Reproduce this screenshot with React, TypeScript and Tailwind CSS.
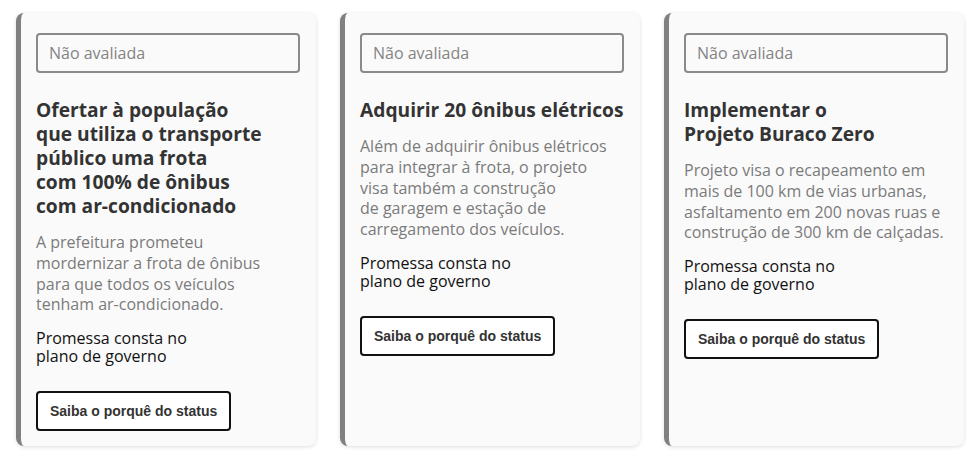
const promises = [
  {
    title: ["Ofertar à população", "que utiliza o transporte", "público uma frota", "com 100% de ônibus", "com ar-condicionado"],
    description: ["A prefeitura prometeu", "mordernizar a frota de ônibus", "para que todos os veículos", "tenham ar-condicionado."],
  },
  {
    title: ["Adquirir 20 ônibus elétricos"],
    description: [
      "Além de adquirir ônibus elétricos",
      "para integrar à frota, o projeto",
      "visa também a construção",
      "de garagem e estação de",
      "carregamento dos veículos.",
    ],
  },
  {
    title: ["Implementar o", "Projeto Buraco Zero"],
    description: [
      "Projeto visa o recapeamento em",
      "mais de 100 km de vias urbanas,",
      "asfaltamento em 200 novas ruas e",
      "construção de 300 km de calçadas.",
    ],
  },
];

function Lines({ lines }: { lines: string[] }) {
  return (
    <>
      {lines.map((line) => (
        <span key={line} className="block whitespace-nowrap">
          {line}
        </span>
      ))}
    </>
  );
}

function PromiseCard({ title, description }: { title: string[]; description: string[] }) {
  return (
    <div className="flex w-[300px] flex-col rounded-lg border-l-[5px] border-[#808080] bg-[#fafafa] pb-[15px] pl-[15px] pr-[16px] pt-[20px] shadow-[0_1px_4px_rgba(0,0,0,0.13)]">
      <div className="flex h-[40px] items-center rounded-[4px] border-2 border-[#8a8a8a] bg-[#fafafa] px-[11px] text-[16px] text-[#848484]">
        Não avaliada
      </div>
      <h3 className="mt-[25px] text-[19.2px] font-bold leading-[24px] text-[#333]">
        <Lines lines={title} />
      </h3>
      <p className="mt-[14px] text-[16px] leading-[1.3] text-[#7a7a7a]">
        <Lines lines={description} />
      </p>
      <p className="mt-[15px] text-[16px] leading-[1.1] text-[#111]">
        Promessa consta no
        <br />
        plano de governo
      </p>
      <div className="mt-[26px]">
        <button
          type="button"
          className="rounded-[4px] border-2 border-[#111] bg-white px-[12px] py-[10px] text-[14px] font-bold leading-[16px] text-[#333] [font-family:'Liberation_Sans',Arial,sans-serif]"
        >
          Saiba o porquê do status
        </button>
      </div>
    </div>
  );
}

export default function App() {
  return (
    <div className="min-h-[457px] bg-white pl-[16px] pt-[13px] [font-family:'Open_Sans',sans-serif]">
      <div className="flex items-stretch gap-[24px]">
        {promises.map((item) => (
          <PromiseCard key={item.title[0]} title={item.title} description={item.description} />
        ))}
      </div>
    </div>
  );
}
